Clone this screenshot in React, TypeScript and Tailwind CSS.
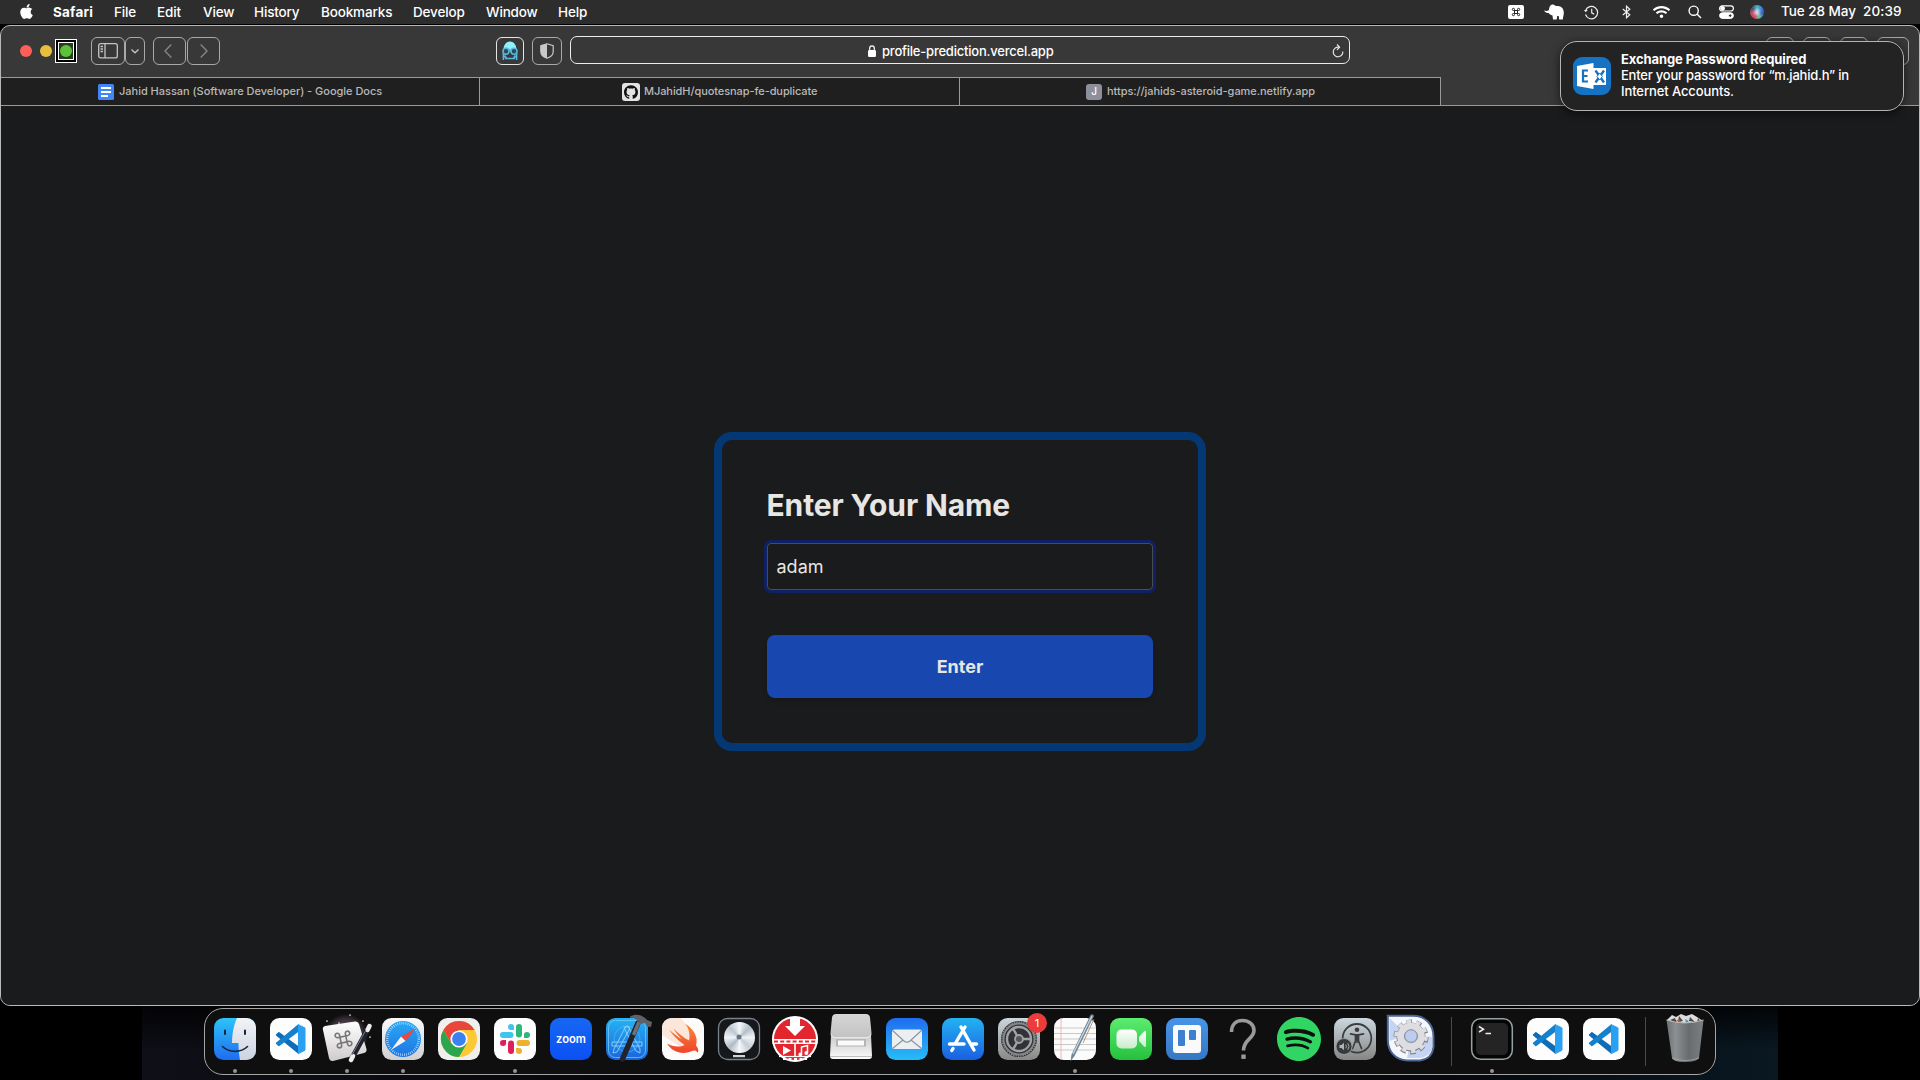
import React from 'react';
import { SiGithub, SiSpotify } from 'react-icons/si';
import { FaApple, FaWifi } from 'react-icons/fa';

type P = { children?: React.ReactNode };

const menus: [string, string][] = [
  ['File', 'w-[22px]'],
  ['Edit', 'w-[25px]'],
  ['View', 'w-[30px]'],
  ['History', 'w-[46px]'],
  ['Bookmarks', 'w-[71px]'],
  ['Develop', 'w-[52px]'],
  ['Window', 'w-[51px]'],
  ['Help', 'w-[30px]'],
];

function MenuBar() {
  return (
    <header className="flex h-6 shrink-0 items-center bg-[#2d2d2d] text-[13.5px] font-medium text-white">
      <FaApple className="ml-[19px] -mt-0.5 h-[17px] w-[15px]" />
      <span className="ml-[19px] w-[41px] font-bold tracking-[0.2px]">Safari</span>
      <nav className="ml-5 flex gap-[21px] tracking-[-0.15px]">
        {menus.map(([m, w]) => (
          <span key={m} className={`${w} whitespace-nowrap`}>{m}</span>
        ))}
      </nav>
      <div className="ml-auto flex items-center">
        <svg className="h-[14px] w-4" viewBox="0 0 16 14">
          <rect width="16" height="14" rx="2" fill="#fff" />
          <path d="M6.5 5.5h3v3h-3zM6.5 5.5H5.6a1.1 1.1 0 1 1 .9-1zM9.5 5.5V4.4a1.1 1.1 0 1 1 1 1.1zM6.5 8.5v1a1.1 1.1 0 1 1-1-1zM9.5 8.5h1a1.1 1.1 0 1 1-1 1z" fill="none" stroke="#222" strokeWidth="1" />
        </svg>
        <svg className="ml-5 h-4 w-5" viewBox="0 0 20 16">
          <path d="M0 6.5C2 7.2 3.800 6.900 5 6 5 3.500 6 1 8 .5c2-.5 3 1 4.300 1.500C16 1.500 19.500 3.500 19.800 8c.2 2.500-.7 4-1 7.500h-3.600l-.5-3.500h-1.500l-.5 3.500H9l-.5-4C6.500 11 5.500 10.300 4.500 9 3 9 1 8.500 0 6.500z" fill="#fff" />
        </svg>
        <svg className="ml-5 h-[15px] w-[15px]" viewBox="0 0 15 15" fill="none" stroke="#eee" strokeWidth="1.2">
          <path d="M1.600 5.500A6.200 6.200 0 1 1 1.500 9.500M7.700 3.800V7.800l2.500 1.500" />
          <path d="M0 5l1.700 2.300L3.700 5z" fill="#eee" stroke="none" />
        </svg>
        <svg className="ml-[23px] h-[14px] w-[9px]" viewBox="0 0 9 14" fill="none" stroke="#eee" strokeWidth="1.200">
          <path d="M.8 4l7 5.800L4.500 12.800V1.200l3.300 3L.8 10" />
        </svg>
        <FaWifi className="ml-[22px] h-[14px] w-[17px]" />
        <svg className="ml-[18px] h-[14px] w-[14px]" viewBox="0 0 14 14" fill="none" stroke="#fff" strokeWidth="1.400">
          <circle cx="5.700" cy="5.700" r="4.600" />
          <path d="M9 9l4 4" />
        </svg>
        <svg className="ml-[17px] h-[14px] w-[15px]" viewBox="0 0 15 14" fill="none" stroke="#fff">
          <rect x=".6" y=".8" width="13.800" height="5.200" rx="2.600" strokeWidth="1.200" />
          <circle cx="3.600" cy="3.400" r="1.900" fill="#fff" />
          <rect x=".6" y="7.800" width="13.800" height="5.600" rx="2.800" fill="#fff" />
          <circle cx="11.200" cy="10.600" r="1.700" fill="#2d2d2d" />
        </svg>
        <span className="ml-[16px] flex h-[14px] w-[14px] items-center justify-center rounded-full bg-[conic-gradient(#3cb8c0,#3b7be0,#3a5ab8,#4fc9a8,#e0405a,#c04a6a,#4a4a6a,#3cb8c0)]">
          <span className="h-1.5 w-1.5 rounded-full bg-white/80 blur-[1.5px]" />
        </span>
        <span className="-mt-0.5 ml-[17px] w-[76px] whitespace-pre tracking-[-0.05px]">Tue 28 May</span>
        <span className="-mt-0.5 ml-[6px] mr-[18px] w-[39px] whitespace-nowrap tracking-[0.1px]">20:39</span>
      </div>
    </header>
  );
}

function Toolbar() {
  return (
    <div className="flex h-[51px] shrink-0 items-start pl-[19px]">
      <span className="mt-[19px] h-3 w-3 rounded-full bg-[#ff5f57]" />
      <span className="mt-[19px] ml-2 h-3 w-3 rounded-full bg-[#e6c03c]" />
      <span className="mt-[13px] ml-[3px] flex h-6 w-[22px] items-center justify-center border border-white bg-black">
        <span className="flex h-[18px] w-4 items-center justify-center border border-white bg-[#2b3a22]">
          <span className="h-3 w-3 rounded-full bg-[#5cc23a]" />
        </span>
      </span>
      <span className="mt-[11px] ml-[14px] flex h-7 w-[34px] items-center justify-center rounded-md border border-[#a9a9a9]">
        <svg className="h-4 w-5" viewBox="0 0 20 16" fill="none" stroke="#c4c4c4" strokeWidth="1.300">
          <rect x=".7" y=".7" width="18.600" height="14.200" rx="2" />
          <path d="M7 .7v14.200M2.500 3.500h2.500M2.500 6h2.500M2.500 8.500h2.500" />
        </svg>
      </span>
      <span className="mt-[11px] flex h-7 w-5 items-center justify-center rounded-md border border-[#a9a9a9]">
        <svg className="h-2 w-2" viewBox="0 0 8 8" fill="none" stroke="#c4c4c4" strokeWidth="1.300"><path d="M.5 2.500L4 5.800l3.500-3.300" /></svg>
      </span>
      <span className="mt-[11px] ml-2 flex h-7 w-[33px] items-center justify-center rounded-md border border-[#a9a9a9]">
        <svg className="-ml-1 h-[14px] w-2" viewBox="0 0 8 14" fill="none" stroke="#858585" strokeWidth="1.400"><path d="M7.300.6L1 7l6.300 6.400" /></svg>
      </span>
      <span className="mt-[11px] ml-px flex h-7 w-[33px] items-center justify-center rounded-md border border-[#a9a9a9]">
        <svg className="h-[14px] w-2" viewBox="0 0 8 14" fill="none" stroke="#858585" strokeWidth="1.400"><path d="M.7.6L7 7 .7 13.400" /></svg>
      </span>
      <span className="mt-[11px] ml-[276px] flex h-7 w-7 items-center justify-center rounded-md border border-[#e4e4e4]">
        <svg className="h-5 w-4" viewBox="0 0 16 20">
          <path d="M1.500 9C1.500 3.500 4.500.5 8 .5S14.500 3.500 14.500 9L11 7 8 9 5 7z" fill="#8ff0ff" />
          <g fill="none" stroke="#58b8dc" strokeWidth="1.600">
            <circle cx="4" cy="10.300" r="3" fill="#2c4a58" />
            <circle cx="12" cy="10.300" r="3" fill="#2c4a58" />
            <path d="M7 10h2M1.400 12v7M14.600 12v7M4 17.500h8" />
            <path d="M2.500 14.500l2 3.500M13.500 14.500l-2 3.500" strokeWidth="2" />
          </g>
        </svg>
      </span>
      <span className="mt-[11px] ml-2 flex h-7 w-[30px] items-center justify-center rounded-md border border-[#a9a9a9]">
        <svg className="h-4 w-[14px]" viewBox="0 0 14 16">
          <path d="M7 .8L13.200 2.800V8.500C13.200 12 10 14.300 7 15.300 4 14.300.8 12 .8 8.500V2.800z" fill="none" stroke="#c8c8c8" strokeWidth="1.200" />
          <path d="M7 .8V15.300C4 14.300.8 12 .8 8.500V2.800z" fill="#c8c8c8" />
        </svg>
      </span>
      <span className="mt-[10px] ml-2 flex h-7 w-[780px] items-center rounded-[7px] border border-[#ececec] text-[13px] text-white">
        <svg className="ml-[297px] mt-px h-3 w-[8px]" viewBox="0 0 8 12">
          <rect y="5" width="8" height="7" rx="1.200" fill="#fff" />
          <path d="M1.700 5.500V3.200a2.300 2.300 0 0 1 4.600 0v2.300" fill="none" stroke="#fff" strokeWidth="1.200" />
        </svg>
        <span className="mt-[3px] ml-[6px] w-[172px] whitespace-nowrap font-medium tracking-[-0.22px]">profile-prediction.vercel.app</span>
        <svg className="mt-0.5 mr-[5px] ml-auto h-[14px] w-3" viewBox="0 0 12 14" fill="none" stroke="#e4e4e4" strokeWidth="1.200">
          <path d="M6.500 3.200A4.800 4.800 0 1 0 10.800 7.500M5 .5l2.600 2.700L5 5.800" />
        </svg>
      </span>
      <span className="mt-[11px] ml-[416px] h-7 w-7 rounded-md border border-[#a9a9a9]" />
      <span className="mt-[11px] ml-[9px] h-7 w-7 rounded-md border border-[#a9a9a9]" />
      <span className="mt-[11px] ml-[9px] h-7 w-7 rounded-md border border-[#a9a9a9]" />
      <span className="mt-[11px] ml-[9px] h-7 w-8 rounded-md border border-[#a9a9a9]" />
    </div>
  );
}

function Tabs() {
  return (
    <div className="flex h-[29px] shrink-0 border-b border-[#9a9a9a] text-[11px] font-medium tracking-[-0.02px] text-[#b9b9b9]">
      <div className="flex w-[479px] items-center border-t border-r border-[#9a9a9a] bg-[#1f1f1f] pl-[97px]">
        <svg className="h-4 w-4" viewBox="0 0 16 16">
          <rect width="16" height="16" rx="1.500" fill="#4285f4" />
          <path d="M3 4h10M3 8h10M3 12h7" stroke="#fff" strokeWidth="1.900" />
        </svg>
        <span className="ml-[5px] whitespace-nowrap">Jahid Hassan (Software Developer) - Google Docs</span>
      </div>
      <div className="flex w-[480px] items-center border-t border-r border-[#9a9a9a] bg-[#1f1f1f] pl-[142px]">
        <span className="flex h-[18px] w-[18px] items-center justify-center rounded-[3px] bg-[#e3e3e3]">
          <SiGithub className="h-[14px] w-[14px] text-[#111]" />
        </span>
        <span className="ml-1 whitespace-nowrap tracking-[-0.08px]">MJahidH/quotesnap-fe-duplicate</span>
      </div>
      <div className="flex w-[481px] items-center border-t border-r border-[#9a9a9a] bg-[#1f1f1f] pl-[126px]">
        <span className="flex h-4 w-4 items-center justify-center rounded-[3px] bg-[#8e8f9c] text-[10px] text-white">J</span>
        <span className="ml-[5px] whitespace-nowrap tracking-[-0.05px]">https://jahids-asteroid-game.netlify.app</span>
      </div>
    </div>
  );
}

function Notification() {
  return (
    <aside className="absolute top-[41px] left-[1560px] flex h-[70px] w-[344px] items-center rounded-[17px] border border-[#b4b4b4] bg-[#232323] pl-3 text-white shadow-[0_2px_10px_rgba(0,0,0,0.6)]">
      <svg className="h-[38px] w-[38px]" viewBox="0 0 38 38">
        <rect width="38" height="38" rx="9" fill="#1673c4" />
        <rect x="20" y="11" width="13" height="17" fill="#fff" />
        <path d="M22.500 13.500l8.500 12M31 13.500l-8.500 12" stroke="#1673c4" strokeWidth="2.400" />
        <path d="M24 19.500l2.700-3.500 2.700 3.500-2.700 3.500z" fill="#fff" stroke="#1673c4" strokeWidth="1" />
        <path d="M4 9L20.500 6v26L4 29z" fill="#fff" />
        <path d="M15 13.500h-5v11h5M10 19h4.500" fill="none" stroke="#1673c4" strokeWidth="2.200" />
      </svg>
      <div className="-mt-[2px] ml-[10px] text-[13px] leading-4 font-medium">
        <p className="font-bold tracking-[-0.1px] whitespace-nowrap">Exchange Password Required</p>
        <p className="tracking-[-0.22px] whitespace-nowrap">Enter your password for “m.jahid.h” in</p>
        <p className="tracking-[-0.1px]">Internet Accounts.</p>
      </div>
    </aside>
  );
}

function NameForm() {
  return (
    <section className="flex h-[319px] w-[492px] flex-col rounded-[18px] border-8 border-[#043874] px-[45px] pt-[47px]">
      <h1 className="-ml-[0.5px] h-9 text-[30px] leading-9 font-bold tracking-[-0.12px] whitespace-nowrap text-[#e8e6e3]">Enter Your Name</h1>
      <div className="mt-5 flex h-[47px] items-center rounded-[4px] border border-[#4a4c4e] pl-[8.5px] text-[18px] text-[#e8e6e3] shadow-[0_0_0_3px_#0f2166]">adam</div>
      <button className="mt-[45px] h-[63px] rounded-lg bg-[#1747af] text-[18px] font-bold text-[#e8e6e3] shadow-md">Enter</button>
    </section>
  );
}

/* Dock icons share a 48-unit canvas; the usual 42-unit tile sits at 3..45. */
const Art = ({ children }: P) => (
  <svg className="h-12 w-12 overflow-visible" viewBox="0 0 48 48">{children}</svg>
);
const Tile = ({ fill, stroke }: { fill: string; stroke?: string }) => (
  <rect x="3" y="3" width="42" height="42" rx="9.500" fill={fill} stroke={stroke} />
);

const Grad = ({ id, a, b }: { id: string; a: string; b: string }) => (
  <linearGradient id={id} x1="0" y1="0" x2="0" y2="1">
    <stop offset="0" stopColor={a} />
    <stop offset="1" stopColor={b} />
  </linearGradient>
);

const Finder = () => (
  <Art>
    <defs>
      <Grad id="fi" a="#2cc4f8" b="#1f6cf0" />
      <Grad id="fj" a="#f2f3f6" b="#ccd3e0" />
    </defs>
    <Tile fill="url(#fi)" />
    <path d="M26 3H35.500A9.500 9.500 0 0 1 45 12.500V35.500A9.500 9.500 0 0 1 35.500 45H29C28 40 27.500 34 27.500 28H21C21 19 23 9 26 3z" fill="url(#fj)" />
    <path d="M14 15.500v3.500M34 15.500v3.500" stroke="#17253f" strokeWidth="2" strokeLinecap="round" />
    <path d="M11.500 31.500C18 38 30 38 36.500 31.500" fill="none" stroke="#17253f" strokeWidth="1.600" strokeLinecap="round" />
  </Art>
);
const Code = () => (
  <Art>
    <Tile fill="#fdfdfd" />
    <path d="M9 20.500Q8.500 19.800 9.200 19.200L11.300 17.300Q12 16.800 12.800 17.400L31.500 31.300V39z" fill="#0f6cb6" />
    <path d="M9 27.700Q8.500 28.400 9.200 29L11.300 30.900Q12 31.400 12.800 30.800L31.500 16.700V9z" fill="#1580cc" />
    <path d="M31 9L37.600 12.200Q38.500 12.700 38.500 13.600V34.600Q38.500 35.500 37.600 36L31 39.200z" fill="#2ba0f2" />
  </Art>
);
const Maestro = () => (
  <Art>
    <defs>
      <radialGradient id="km"><stop offset=".4" stopColor="#55604a" /><stop offset=".75" stopColor="#3b2f3c" /><stop offset="1" stopColor="#101010" /></radialGradient>
      <Grad id="kp" a="#ffffff" b="#cfcbcd" />
    </defs>
    <circle cx="23" cy="21" r="22" fill="url(#km)" />
    <path d="M2 11Q-1 12 0 15L6 43Q7 46.500 10 46L41 38Q44 37 43.500 34L36 9Q35 6 32 6.500z" fill="url(#kp)" />
    <g transform="translate(20.500 24.500) rotate(-12)" fill="none" stroke="#777" strokeWidth="1.600">
      <path d="M-3-3H3V3H-3zM-3-3H-5A2.200 2.200 0 1 1-3-5zM3-3V-5A2.200 2.200 0 1 1 5-3zM-3 3V5A2.200 2.200 0 1 1-5 3zM3 3H5A2.200 2.200 0 1 1 3 5z" />
    </g>
    <path d="M46.500 11L28 45" stroke="#20222c" strokeWidth="5" strokeLinecap="round" />
    <path d="M46.500 11L44.500 15M30 41l-2 4" stroke="#eee" strokeWidth="4.500" strokeLinecap="round" />
    <path d="M43 15L29 40" stroke="#777c88" strokeWidth="1" />
    <path d="M16 8v.1M4 6v.1M40 6v.1M27 0v.1M47 22v.1" stroke="#ddd" strokeWidth="1.700" strokeLinecap="round" />
  </Art>
);
const Safari = () => (
  <Art>
    <defs><Grad id="sa" a="#fafafa" b="#d0d0d0" /><Grad id="sb" a="#2aa8f4" b="#1f75e2" /></defs>
    <Tile fill="url(#sa)" />
    <circle cx="24" cy="24" r="18" fill="url(#sb)" />
    <circle cx="24" cy="24" r="15.800" fill="none" stroke="#bfe4ff" strokeWidth="2.400" strokeDasharray=".7 1.370" />
    <path d="M36.500 13.500L22 21.500l4.500 4.500z" fill="#f2453d" />
    <path d="M12 35L22 21.500l4.500 4.500z" fill="#f4f4f4" />
  </Art>
);
const Chrome = () => (
  <Art>
    <Tile fill="#f1efee" />
    <circle cx="24" cy="24" r="18" fill="#fcc934" />
    <path d="M24 15H39.600A18 18 0 0 0 8.400 15L16 28z" fill="#e8453c" />
    <path d="M8.400 15A18 18 0 0 0 24 42L31.800 28.500 16.200 28.500z" fill="#2da44e" />
    <circle cx="24" cy="24" r="8.600" fill="#fff" />
    <circle cx="24" cy="24" r="6.900" fill="#3b82f0" />
  </Art>
);
const Slack = () => (
  <Art>
    <Tile fill="#fdfdfd" />
    <g strokeWidth="6" strokeLinecap="round">
      <path d="M12 20h7.500" stroke="#3fc4ee" /><path d="M20 12v.1" stroke="#3fc4ee" /><path d="M20 12h3v3h-3z" fill="#3fc4ee" />
      <path d="M28 12v7.500" stroke="#2fb67c" /><path d="M36 20h-.1" stroke="#2fb67c" /><path d="M33 20h3v3h-3z" fill="#2fb67c" />
      <path d="M28.500 28H36" stroke="#ecb22e" /><path d="M28 36v-.1" stroke="#ecb22e" /><path d="M25 33h3v3h-3z" fill="#ecb22e" />
      <path d="M20 28.500V36" stroke="#e01e5a" /><path d="M12 28h.1" stroke="#e01e5a" /><path d="M12 25h3v3h-3z" fill="#e01e5a" />
    </g>
  </Art>
);
const Zoom = () => (
  <Art>
    <defs><Grad id="zo" a="#1767f2" b="#0b50f5" /></defs>
    <Tile fill="url(#zo)" />
    <text x="24" y="27.500" textAnchor="middle" fill="#fff" fontSize="11.500" fontWeight="600" textLength="30" lengthAdjust="spacingAndGlyphs">zoom</text>
  </Art>
);
const Xcode = () => (
  <Art>
    <defs><Grad id="xc" a="#25b4f4" b="#1a64dc" /></defs>
    <Tile fill="url(#xc)" />
    <rect x="5.500" y="5.500" width="37" height="37" rx="7" fill="none" stroke="#74c6f8" strokeWidth=".8" />
    <circle cx="24" cy="24" r="13" fill="none" stroke="#5cb8f5" strokeWidth=".6" />
    <path d="M23 11l4 2-13 24-4 1 1-4zM21 13l4-2 12 23v4l-4-2zM9 27h30v4H9z" fill="none" stroke="#8ed2fa" strokeWidth=".9" />
    <path d="M35 8L19.500 44" stroke="#23242b" strokeWidth="5.500" strokeLinecap="round" />
    <path d="M36 7L30.500 20" stroke="#6f7078" strokeWidth="3.500" />
    <path d="M27 1.500C33-2 40 0 44 5l5 2-1 5-4-.5-2-3.500-5 1C34 4 31 2 27 3z" fill="#5f6169" />
  </Art>
);
const Swift = () => (
  <Art>
    <defs><Grad id="sw" a="#f98b3e" b="#f0432a" /></defs>
    <Tile fill="#fdfcfb" />
    <path d="M3 14A11 11 0 0 1 12.500 3H22L38 24 28 36 3 20z" fill="#fbe6da" />
    <path d="M26 8.500C35 14.500 39.500 22 37 30.500 40 34 39.500 37 38.500 37.500 36.500 34.500 34 35.500 32 36.500 23 40 13 37 8 28.500 14 32 21 32.500 25.500 30 18.500 25 13 19.500 10 14.500 14 18 19 22 22.500 24 19 20.500 16 16.500 14.500 13.500 19 18 25 23 30 25.500 31.500 20 30 13.500 26 8.500z" fill="url(#sw)" />
  </Art>
);
const Logic = () => (
  <Art>
    <rect x="3.500" y="3.500" width="41" height="41" rx="9" fill="#17181b" stroke="#77838c" strokeWidth="1.300" />
    <foreignObject x="8.500" y="6.500" width="31" height="31">
      <div className="h-[31px] w-[31px] rounded-full bg-[conic-gradient(#f4f8fb,#b3bec8,#eef3f7,#c4ced6,#f6f8fa,#b0bac4,#edf3f8,#bcc6d0,#f4f8fb)]" />
    </foreignObject>
    <circle cx="24" cy="22" r="2.500" fill="#67727d" />
    <rect x="18" y="40" width="12" height="2.200" fill="#cfd3d6" />
  </Art>
);
const Downie = () => (
  <Art>
    <circle cx="24" cy="24" r="23" fill="#fff" />
    <circle cx="24" cy="24" r="21" fill="#e3262e" />
    <path d="M19 2h10v9h5L24 21 14 11h5z" fill="#fff" />
    <path d="M1.500 24h45v5h-45z" fill="#fff" />
    <path d="M3 26.500h42" stroke="#e3262e" strokeWidth="2" strokeDasharray="4 2.200" />
    <path d="M24 28v14" stroke="#fff" strokeWidth="1.600" />
    <path d="M12 31v9l8-4.500z" fill="#fff" />
    <path d="M30.500 39.500v-7.500l6-1.500v7.500" fill="none" stroke="#fff" strokeWidth="1.500" />
    <circle cx="29.300" cy="39.500" r="1.900" fill="#fff" /><circle cx="35.300" cy="38" r="1.900" fill="#fff" />
    <path d="M8 41.500h32" stroke="#fff" strokeWidth="1.200" />
    <path d="M12 44h24" stroke="#fff" strokeWidth="2" strokeDasharray="3 2.500" />
  </Art>
);
const Drive = () => (
  <Art>
    <defs><Grad id="dr" a="#d6d6d6" b="#c2c2c2" /><Grad id="ds" a="#c8c8c8" b="#fbfbfb" /></defs>
    <path d="M4 20h40l1 21q0 3-3 3H6q-3 0-3-3z" fill="url(#ds)" />
    <path d="M9 24h30v7.500H9z" fill="#b4b4b4" />
    <path d="M11 25.500h26v5H11z" fill="#fafafa" />
    <path d="M9-1h30q3.500 0 4 3.500L44.500 18q0 5-4.500 5H8q-4.500 0-4.500-5L5 2.500Q5.500-1 9-1z" fill="url(#dr)" />
    <path d="M4 19.500q1 3.300 4.500 3.300h31Q43 22.800 44 19.500" fill="none" stroke="#f4f4f4" />
    <path d="M3 41.500h42" stroke="#b2b2b2" strokeWidth=".8" />
  </Art>
);
const Mail = () => (
  <Art>
    <defs><Grad id="ma" a="#1f6cf0" b="#27bdf8" /></defs>
    <Tile fill="url(#ma)" />
    <rect x="9" y="14.500" width="30" height="19.500" rx="2.500" fill="#eceff2" />
    <path d="M9.500 15.500L21 26q3 2.500 6 0L38.500 15.500M9.500 33.500L20 25M38.500 33.500L28 25" fill="none" stroke="#8a929c" strokeWidth="1.100" />
  </Art>
);
const Store = () => (
  <Art>
    <defs><Grad id="st" a="#24b2f2" b="#1a60e0" /></defs>
    <Tile fill="url(#st)" />
    <path d="M26 12L16 29M22 12L35 35M10.500 29H25M31.500 29h6M14 33.500L12.800 35.500" stroke="#fff" strokeWidth="3.400" strokeLinecap="round" />
  </Art>
);
const Settings = () => (
  <Art>
    <defs><Grad id="se" a="#cdd6dc" b="#8a8886" /></defs>
    <Tile fill="url(#se)" />
    <g fill="none">
      <circle cx="24" cy="24" r="18" fill="#303235" />
      <circle cx="24" cy="24" r="15.500" stroke="#85888b" strokeWidth="2" />
      <circle cx="24" cy="24" r="17" stroke="#8a8c8e" strokeWidth="1.400" strokeDasharray="1.200 1.200" />
      <circle cx="24" cy="24" r="12" stroke="#a0a2a4" strokeWidth="2.400" />
      <path d="M24 24H36M24 24L18 13.600M24 24L18 34.400" stroke="#a0a2a4" strokeWidth="2.400" />
      <circle cx="24" cy="24" r="4" fill="#55585a" stroke="#a0a2a4" strokeWidth="1.800" />
    </g>
    <circle cx="42" cy="8" r="10" fill="#ec3b3b" />
    <text x="42" y="12" textAnchor="middle" fill="#fff" fontSize="11">1</text>
  </Art>
);
const TextEdit = () => (
  <Art>
    <Tile fill="#fbfbfb" />
    <path d="M3 13h42M3 18.500h42M3 24h42M3 29.500h42M3 35h42" stroke="#c9c9c9" strokeWidth="1" />
    <path d="M10 3v42" stroke="#f3b9b4" />
    <path d="M43 1L23.500 41 19.500 46.500 20.500 39.500 39.500 0Q42-2 43 1z" fill="#718697" />
    <path d="M41 1L22 39" stroke="#c9d6df" strokeWidth="1.200" />
    <path d="M43 4L32 28" stroke="#a97b54" strokeWidth=".8" />
  </Art>
);
const FaceTime = () => (
  <Art>
    <defs><Grad id="fa" a="#5cec70" b="#26c03e" /><Grad id="fb" a="#ffffff" b="#c8eccc" /></defs>
    <Tile fill="url(#fa)" />
    <rect x="9.500" y="14.500" width="20.500" height="19" rx="5" fill="url(#fb)" />
    <path d="M32 22L37 16.500Q39 15 39 17.500V30.500Q39 33 37 31.500L32 26z" fill="url(#fb)" />
  </Art>
);
const Trello = () => (
  <Art>
    <defs><Grad id="tr" a="#4795e8" b="#3577c4" /></defs>
    <Tile fill="url(#tr)" />
    <rect x="10" y="10" width="28" height="28" rx="3" fill="#fafafa" />
    <rect x="15" y="15" width="7" height="16" rx="1" fill="#3c80cf" />
    <rect x="26" y="15" width="7" height="10" rx="1" fill="#3c80cf" />
  </Art>
);
const Question = () => (
  <Art>
    <path d="M12.500 17C12.500 9 17.500 5.500 23.500 5.500S35 9 35 15.500C35 24 24.500 24 24.500 35.500" fill="none" stroke="#9b9999" strokeWidth="3.600" />
    <path d="M22.300 39.500h4.400v4.400h-4.400z" fill="#9b9999" />
  </Art>
);
const Spotify = () => <SiSpotify className="h-11 w-11 text-[#30d564]" />;
const Access = () => (
  <Art>
    <defs><Grad id="ac" a="#cbd8df" b="#868583" /></defs>
    <Tile fill="url(#ac)" />
    <circle cx="26" cy="23.300" r="14.300" fill="none" stroke="#3a3e40" strokeWidth="1.800" />
    <circle cx="26" cy="14.800" r="2.300" fill="#3a3e40" />
    <path d="M19.500 18.800L24.500 19.800V26L21.500 33.500M32.500 18.800L27.500 19.800V26L30.500 33.500M24.500 19.800h3V27h-3z" fill="none" stroke="#3a3e40" strokeWidth="1.700" strokeLinecap="round" strokeLinejoin="round" />
    <path d="M25 20h2v6h-2z" fill="#3a3e40" />
    <circle cx="13" cy="31.500" r="8" fill="#37393b" stroke="#a4a8aa" strokeWidth=".8" />
    <path d="M8.500 30h2l2.500-2.200v7.400L10.500 33h-2z" fill="#aeb3b5" />
    <path d="M14.800 29.700q1.300 1.800 0 3.600M16.800 28.200q2.400 3.300 0 6.600" fill="none" stroke="#aeb3b5" strokeWidth=".9" />
  </Art>
);
const Gear = () => (
  <Art>
    <path d="M.8.8H26C38 .8 46.500 9 46.500 22V32Q45 44 33 45.500H20C8 45 .8 36 .8 25z" fill="#f4f7fd" stroke="#4c6492" strokeWidth="2" />
    <path d="M2.500 3L20 20 2.500 26zM25 20l20 2V34Q42 42 33 43L20 43z" fill="#c4d4f2" />
    <circle cx="24" cy="22" r="15.300" fill="none" stroke="#85858d" strokeWidth="4.500" strokeDasharray="5.300 4.310" />
    <circle cx="24" cy="22" r="10.300" fill="none" stroke="#85858d" strokeWidth="8.500" />
    <circle cx="24" cy="21.500" r="14.800" fill="none" stroke="#dedee2" strokeWidth="4" strokeDasharray="4.300 5" />
    <circle cx="24" cy="21.500" r="10.300" fill="none" stroke="#dedee2" strokeWidth="7" />
    <circle cx="24" cy="21" r="6.300" fill="#bccdf0" stroke="#888c98" />
  </Art>
);
const Terminal = () => (
  <Art>
    <rect x="3.700" y="3.700" width="40.600" height="40.600" rx="9" fill="#050505" stroke="#98a2a6" strokeWidth="1.500" />
    <rect x="8" y="8" width="32" height="32" rx="5" fill="#242424" />
    <path d="M11 11.500l4.500 2.700L11 17M17.500 18.500h5.500" fill="none" stroke="#eee" strokeWidth="1.500" />
  </Art>
);
const Trash = () => (
  <Art>
    <defs><linearGradient id="ts"><stop offset="0" stopColor="#6c7072" /><stop offset=".25" stopColor="#8b9092" /><stop offset=".6" stopColor="#686c6e" /><stop offset="1" stopColor="#7b7f81" /></linearGradient></defs>
    <path d="M6 5L11 0l4 2 5-3 5 2 6-2 5 3 6 4-2 4H8z" fill="#dcdcdc" />
    <path d="M9 5l5-2 2 5zM18 1l4 5-5 1zM29 2l5 5-6-1zM37 3l3 4-4 1z" fill="#4d4546" />
    <path d="M15 6l3-2 2 3z" fill="#b65a3c" /><path d="M24 4l4 2-3 2z" fill="#3da4ac" />
    <path d="M5.500 5Q24 11 42.500 5L38 43Q36 47 24 47T11 43z" fill="url(#ts)" />
    <path d="M5.500 5Q24 11 42.500 5" fill="none" stroke="#b5b8ba" />
    <path d="M11 43Q24 48 38 43" fill="none" stroke="#a2a6a8" strokeWidth=".8" />
  </Art>
);

type DockItem = { icon: () => React.ReactElement; running?: boolean };
const apps: DockItem[] = [
  { icon: Finder, running: true }, { icon: Code, running: true }, { icon: Maestro, running: true },
  { icon: Safari, running: true }, { icon: Chrome }, { icon: Slack, running: true }, { icon: Zoom },
  { icon: Xcode }, { icon: Swift }, { icon: Logic }, { icon: Downie }, { icon: Drive }, { icon: Mail },
  { icon: Store }, { icon: Settings }, { icon: TextEdit, running: true }, { icon: FaceTime },
  { icon: Trello }, { icon: Question }, { icon: Spotify }, { icon: Access }, { icon: Gear },
];
const recent: DockItem[] = [{ icon: Terminal, running: true }, { icon: Code }, { icon: Code }];

const Slot = ({ item }: { item: DockItem }) => (
  <div className="flex w-14 flex-col items-center pt-[6px]">
    <div className="flex h-12 w-12 items-center justify-center"><item.icon /></div>
    {item.running && <span className="mt-[6px] h-1 w-1 rounded-full bg-[#959595]" />}
  </div>
);

function Dock() {
  return (
    <footer className="flex h-[74px] shrink-0 justify-center bg-black">
      <div className="flex h-full w-[1636px] bg-[linear-gradient(180deg,rgba(0,0,0,0.8),transparent_60%),linear-gradient(90deg,#0e0f17,#07070b_30%,#05080c_80%,#0a1822)] pt-[2px] pl-[62px]">
        <div className="flex h-[67px] w-[1512px] rounded-[19px] border border-[#a5a5a5] bg-[#0f0f0f] pl-[2px]">
          {apps.map((a, i) => <Slot key={i} item={a} />)}
          <span className="mt-2 ml-3 h-[49px] w-px bg-[#4a4a4a]" />
          <span className="w-3" />
          {recent.map((a, i) => <Slot key={i} item={a} />)}
          <span className="mt-2 ml-[13px] h-[49px] w-px bg-[#4a4a4a]" />
          <span className="w-[11px]" />
          <Slot item={{ icon: Trash }} />
        </div>
      </div>
    </footer>
  );
}

export default function App() {
  return (
    <div className="relative flex h-[1080px] w-[1920px] flex-col overflow-hidden bg-black font-['Inter',sans-serif]">
      <MenuBar />
      <main className="mt-px flex h-[981px] shrink-0 flex-col overflow-hidden rounded-[10px] border border-[#b9b9b9] bg-[#383838]">
        <Toolbar />
        <Tabs />
        <div className="flex flex-1 justify-center bg-[#191b1c] pt-[326px]">
          <NameForm />
        </div>
      </main>
      <Dock />
      <Notification />
    </div>
  );
}
